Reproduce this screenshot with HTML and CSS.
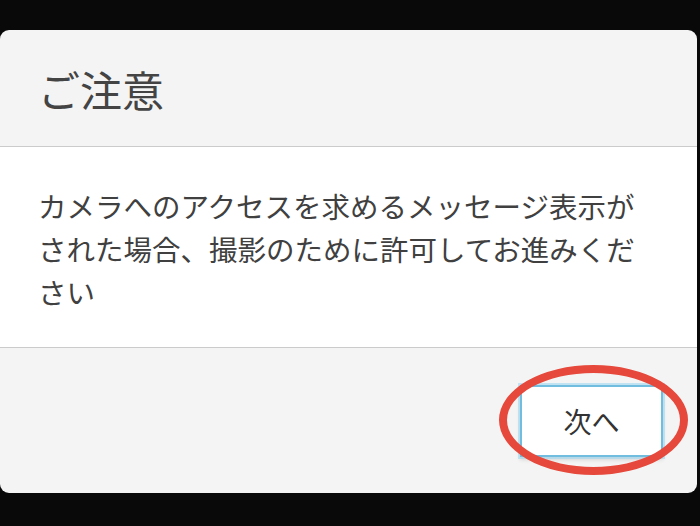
FILE: index.html
```html
<!DOCTYPE html>
<html lang="ja">
  <head>
    <meta charset="UTF-8" />
    <meta name="viewport" content="width=device-width, initial-scale=1.0" />
    <title>ご注意</title>
    <link rel="stylesheet" href="styles.css">
  </head>
  <body>
    <div class="dialog">
      <div class="dialog-header">
        <h1 class="dialog-title">ご注意</h1>
      </div>
      <div class="dialog-body">
        <p class="message">カメラへのアクセスを求めるメッセージ表示がされた場合、撮影のために許可してお進みください</p>
      </div>
      <div class="dialog-footer">
        <button type="button" class="btn-next">
          次へ
          <span class="mark"></span>
        </button>
      </div>
    </div>
  </body>
</html>
```

FILE: styles.css
```css
body {
  margin: 0;
  background-color: #090909;
  font-family: "Noto Sans CJK JP", "Noto Sans", sans-serif;
}
.dialog {
  width: 697px;
  margin-top: 30px;
  border-radius: 9px;
  overflow: hidden;
  background-color: #f4f4f4;
}
.dialog-header {
  display: flex;
  align-items: center;
  padding: 0 38px;
  border-bottom: 1px solid #cbcbcb;
  box-sizing: border-box;
  height: 117px;
}
.dialog-title {
  margin: 0;
  font-size: 42px;
  font-weight: normal;
  color: #444;
}
.dialog-body {
  height: 201px;
  box-sizing: border-box;
  background-color: white;
  padding: 37px 48px 0 38px;
  border-bottom: 1px solid #cbcbcb;
}
.message {
  margin: 0;
  font-size: 28.5px;
  line-height: 43px;
  color: #404040;
}
.dialog-footer {
  height: 145px;
  display: flex;
  justify-content: flex-end;
  align-items: flex-start;
  padding: 37px 34px 0 0;
  box-sizing: border-box;
}
.btn-next {
  position: relative;
  width: 143px;
  height: 72px;
  background-color: white;
  border: 2px solid #71bde0;
  box-shadow: 0 0 0 2px rgba(160, 215, 238, 0.6), 0 3px 4px rgba(0, 0, 0, 0.12);
  font-family: "Noto Sans CJK JP", sans-serif;
  font-size: 28px;
  color: #333;
  padding: 0;
}
.mark {
  position: absolute;
  left: -23px;
  top: -22px;
  width: 189px;
  height: 110px;
  box-sizing: border-box;
  border: 8px solid #e6483b;
  border-radius: 50%;
}
```
